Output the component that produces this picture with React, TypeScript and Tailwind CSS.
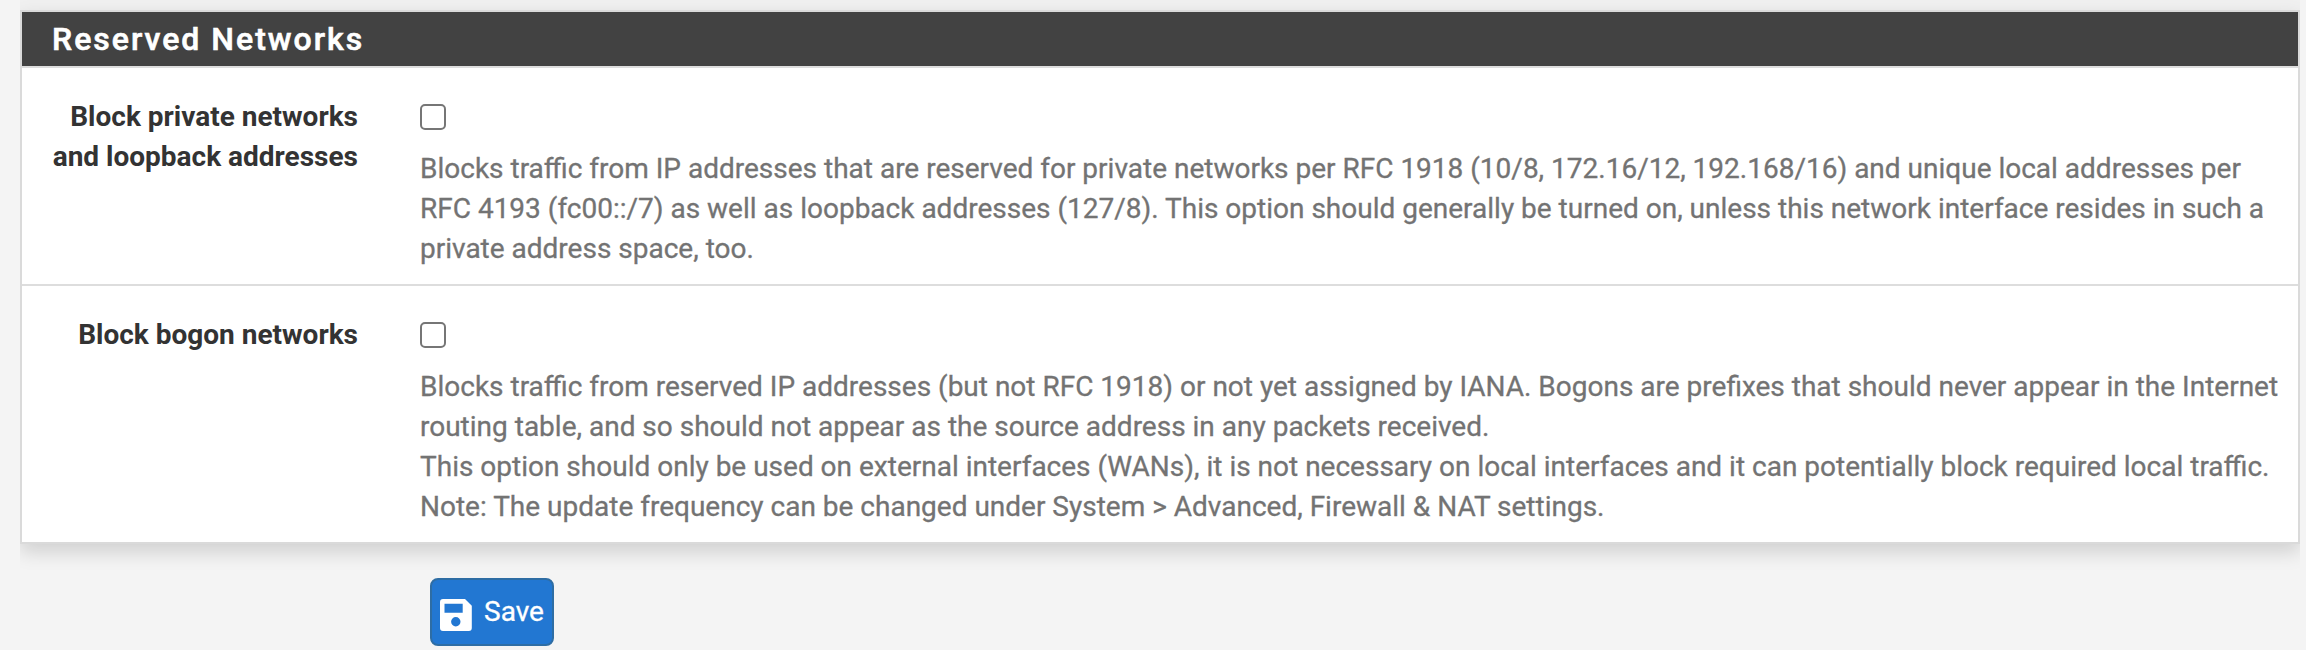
import React from "react";

const rows = [
  {
    label: ["Block private networks", "and loopback addresses"],
    lines: [
      "Blocks traffic from IP addresses that are reserved for private networks per RFC 1918 (10/8, 172.16/12, 192.168/16) and unique local addresses per",
      "RFC 4193 (fc00::/7) as well as loopback addresses (127/8). This option should generally be turned on, unless this network interface resides in such a",
      "private address space, too.",
    ],
    cls: "h-[216px]",
  },
  {
    label: ["Block bogon networks"],
    lines: [
      "Blocks traffic from reserved IP addresses (but not RFC 1918) or not yet assigned by IANA. Bogons are prefixes that should never appear in the Internet",
      "routing table, and so should not appear as the source address in any packets received.",
      "This option should only be used on external interfaces (WANs), it is not necessary on local interfaces and it can potentially block required local traffic.",
      "Note: The update frequency can be changed under System > Advanced, Firewall & NAT settings.",
    ],
    cls: "h-[258px] border-t-2 border-[#dddddd]",
  },
];

export default function App() {
  return (
    <div className="h-[650px] overflow-hidden bg-[#f4f4f4] pl-[20px] font-['Roboto',sans-serif]">
      <div className="h-[578px] w-[2280px] overflow-hidden">
        <div className="h-[10px] bg-[#f0f0f0]" />
        <section className="border-2 border-[#dadada] bg-white shadow-[0_8px_18px_rgba(0,0,0,0.15)]">
          <h2 className="flex h-[56px] items-center border-b-2 border-[#dddddd] bg-[#424242] pl-[30px] text-[32px] font-medium tracking-[2px] text-white [-webkit-text-stroke:0.6px]">
            Reserved Networks
          </h2>
          {rows.map((r) => (
            <div key={r.label[0]} className={"flex pt-[29px] " + r.cls}>
              <div className="w-[336px] shrink-0 whitespace-nowrap text-right text-[28px] font-bold leading-[40px] text-[#333333]">
                {r.label.map((l) => (
                  <div key={l}>{l}</div>
                ))}
              </div>
              <div className="ml-[62px] whitespace-nowrap text-[28px] leading-[40px] text-[#737373] [-webkit-text-stroke:0.3px]">
                <div className="mb-[12px] flex h-[40px] items-center">
                  <input type="checkbox" className="size-[26px] appearance-none rounded-[5px] border-2 border-[#767676] bg-white" />
                </div>
                {r.lines.map((l) => (
                  <div key={l}>{l}</div>
                ))}
              </div>
            </div>
          ))}
        </section>
      </div>
      <button className="ml-[410px] flex h-[68px] w-[124px] items-center gap-[12px] rounded-[8px] border-2 border-[#2e6da4] bg-[#2277d2] pl-[8px] text-[28px] text-white [-webkit-text-stroke:0.3px]">
        <svg className="mt-[5px] shrink-0" width="32" height="32" viewBox="0 0 32 32" fill="white">
          <path fillRule="evenodd" d="M3 0h22l6.800 6.800V29a3 3 0 0 1-3 3H3a3 3 0 0 1-3-3V3a3 3 0 0 1 3-3zM4.500 4.800v9h18.200v-9zM15.800 18a4.700 4.700 0 1 0 0 9.400 4.700 4.700 0 0 0 0-9.400z" />
        </svg>
        Save
      </button>
    </div>
  );
}
